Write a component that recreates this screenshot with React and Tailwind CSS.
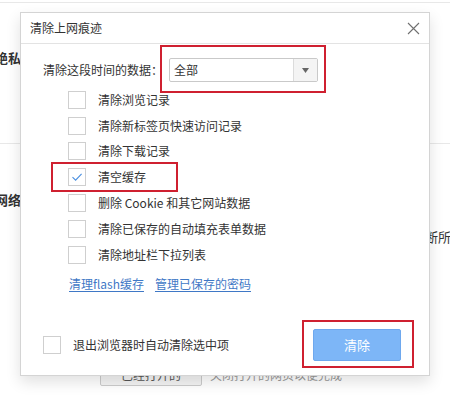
import React from 'react';

const rows = [
  { label: '清除浏览记录', checked: false },
  { label: '清除新标签页快速访问记录', checked: false },
  { label: '清除下载记录', checked: false },
  { label: '清空缓存', checked: true },
  { label: '删除 Cookie 和其它网站数据', checked: false },
  { label: '清除已保存的自动填充表单数据', checked: false },
  { label: '清除地址栏下拉列表', checked: false },
];

function Checkbox({ checked }) {
  return (
    <span className="flex h-[18px] w-[18px] shrink-0 items-center justify-center border border-[#cfcfcf] bg-white">
      {checked && (
        <svg width="14" height="14" viewBox="0 0 14 14" fill="none">
          <path d="M2.5 7.2 L5.6 10.2 L11.6 3.8" stroke="#4a8fe0" strokeWidth="1.1" />
        </svg>
      )}
    </span>
  );
}

export default function App() {
  return (
    <div className="relative h-[404px] w-[450px] overflow-hidden bg-white font-['Noto_Sans_CJK_SC','Noto_Sans',sans-serif] text-[#333]">
      {/* settings page behind the dialog */}
      <div className="pt-[2px]">
        <div className="border-t border-[#e8e8e8]" />
        <div className="ml-[-5px] mt-[46px] whitespace-nowrap text-[13px] font-bold leading-[18px]">绝私设置</div>
        <div className="mt-[76px] border-t border-[#e8e8e8]" />
        <div className="ml-[-5px] mt-[47px] whitespace-nowrap text-[13px] font-bold leading-[18px]">网络内容</div>
        <div className="ml-[425px] mt-[19px] whitespace-nowrap text-[13px] leading-[18px]">断所有</div>
        <div className="ml-[100px] mt-[117px] flex items-center gap-[8px]">
          <div className="flex h-[23px] w-[102px] items-center justify-center rounded-[2px] border border-[#cccccc] bg-[#f4f4f4] text-[12px] text-[#555]">已经打开的</div>
          <div className="whitespace-nowrap text-[12px] text-[#999]">关闭打开的网页以便完成</div>
        </div>
      </div>

      {/* dialog */}
      <div className="absolute left-[20px] top-[12px] flex h-[364px] w-[410px] flex-col border border-[#d4d4d4] bg-white shadow-[0_6px_14px_rgba(0,0,0,0.12)]">
        <div className="flex h-[31px] shrink-0 items-center justify-between border-b border-[#e3e3e3] pl-[9px] pr-[9px]">
          <span className="text-[12px] text-[#333]">清除上网痕迹</span>
          <svg width="13" height="13" viewBox="0 0 13 13" className="mt-[1px]">
            <path d="M1 1 L12 12 M12 1 L1 12" stroke="#707070" strokeWidth="1.1" />
          </svg>
        </div>

        <div className="relative flex flex-1 flex-col">
          <div className="mt-[14px] flex items-center pl-[22px]">
            <span className="w-[126px] text-[12px]">清除这段时间的数据：</span>
            <div className="flex h-[24px] w-[149px] items-center rounded-[2px] border border-[#c9c9c9] bg-white">
              <span className="flex-1 pl-[4px] text-[12px]">全部</span>
              <span className="flex h-full w-[24px] items-center justify-center border-l border-[#dcdcdc] bg-[#f4f4f4]">
                <svg width="7" height="5" viewBox="0 0 7 5">
                  <path d="M0 0 H7 L3.5 5 Z" fill="#666" />
                </svg>
              </span>
            </div>
          </div>

          <div className="mt-[5px] flex flex-col pl-[47px]">
            {rows.map((r) => (
              <div key={r.label} className="flex h-[25.8px] items-center gap-[12px]">
                <Checkbox checked={r.checked} />
                <span className="whitespace-nowrap text-[12px] text-[#333]">{r.label}</span>
              </div>
            ))}
          </div>

          <div className="mt-[8px] flex gap-[11px] pl-[48px] text-[12px] leading-[16px] text-[#3f78c6]">
            <span className="underline underline-offset-2">清理flash缓存</span>
            <span className="underline underline-offset-2">管理已保存的密码</span>
          </div>

          <div className="mt-auto mb-[14px] flex items-center pl-[22px] pr-[28px]">
            <Checkbox checked={false} />
            <span className="ml-[12px] flex-1 text-[12px]">退出浏览器时自动清除选中项</span>
            <div className="flex h-[32px] w-[88px] items-center justify-center rounded-[2px] border border-[#6ea8ee] bg-[#7db6f7] text-[13px] text-white">清除</div>
          </div>

          {/* red annotation boxes */}
          <div className="pointer-events-none absolute left-[139px] top-[1px] h-[48px] w-[166px] border-2 border-[#cf2030]" />
          <div className="pointer-events-none absolute left-[30px] top-[118px] h-[30px] w-[127px] border-2 border-[#cf2030]" />
          <div className="pointer-events-none absolute left-[281px] top-[276px] h-[48px] w-[112px] border-2 border-[#cf2030]" />
        </div>
      </div>
    </div>
  );
}
